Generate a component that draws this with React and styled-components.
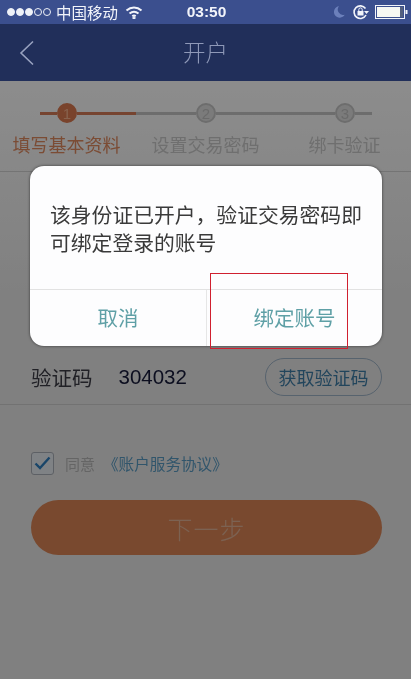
import React from "react";
import styled, { createGlobalStyle } from "styled-components";

const Global = createGlobalStyle`
  html, body { margin: 0; padding: 0; background: #7f7f7f; }
  * { box-sizing: border-box; }
`;

const Screen = styled.div`
  position: relative;
  width: 411px;
  height: 679px;
  overflow: hidden;
  background: linear-gradient(#fff 0, #fff 90px, #e9e9e9 300px);
  font-family: "Noto Sans CJK SC", "Noto Sans", sans-serif;
  filter: blur(0.35px);
`;

const StatusBar = styled.div`
  height: 24px;
  background: #3b4f8e;
  color: #f2f4fa;
  display: grid;
  grid-template-columns: 1fr auto 1fr;
  align-items: center;
  padding: 0 3px 0 7px;
`;

const StatusLeft = styled.div`
  display: flex;
  align-items: center;
`;

const StatusRight = styled.div`
  display: flex;
  align-items: center;
  justify-content: flex-end;
`;

const Dot = styled.span`
  width: 8px;
  height: 8px;
  margin-right: 1px;
  border-radius: 50%;
  border: 1px solid #eef1f8;
  background: ${(p) => (p.$on ? "#eef1f8" : "transparent")};
`;

const Carrier = styled.span`
  font-size: 15.5px;
  line-height: 20px;
  margin-left: 4px;
  margin-right: 7px;
`;

const Clock = styled.span`
  font-family: "Liberation Sans", sans-serif;
  font-weight: 700;
  font-size: 15.5px;
  margin-right: 2px;
`;

const NavBar = styled.div`
  height: 57px;
  padding-bottom: 3px;
  background: #212f5a;
  display: flex;
  align-items: center;
  justify-content: center;
  position: relative;
`;

const BackButton = styled.div`
  position: absolute;
  left: 19px;
  top: 16px;
  width: 16px;
  height: 26px;
  display: flex;
`;

const NavTitle = styled.h1`
  margin: 0;
  font-size: 22.5px;
  font-weight: 300;
  color: #8f99b8;
`;

const StepSection = styled.section`
  height: 91px;
  border-bottom: 1px solid #d4d4d4;
  padding-top: 22px;
`;

const Track = styled.div`
  display: flex;
  align-items: center;
  height: 20px;
  padding-left: 40px;
`;

const Segment = styled.div`
  width: ${(p) => p.$w}px;
  height: 3px;
  background: ${(p) => (p.$on ? "#d87c58" : "#c6c6c6")};
`;

const StepDot = styled.div`
  width: 20px;
  height: 20px;
  border-radius: 50%;
  display: flex;
  align-items: center;
  justify-content: center;
  font-family: "Liberation Sans", sans-serif;
  font-size: 15px;
  background: ${(p) => (p.$on ? "#dc7a50" : "#e0e0e0")};
  border: 2px solid ${(p) => (p.$on ? "#dc7a50" : "#c6c6c6")};
  color: ${(p) => (p.$on ? "#f7b18c" : "#c2c2c2")};
`;

const StepLabels = styled.div`
  display: grid;
  grid-template-columns: repeat(3, 139px);
  justify-content: center;
  margin-top: 9px;
`;

const StepLabel = styled.span`
  text-align: center;
  font-size: 18px;
  line-height: 24px;
  white-space: nowrap;
  color: ${(p) => (p.$on ? "#e08a60" : "#cacaca")};
`;

const Form = styled.div`
  padding-top: 177px;
`;

const CodeRow = styled.div`
  height: 56px;
  display: flex;
  align-items: center;
  padding: 0 29px 0 31px;
  border-bottom: 1px solid #cfcfcf;
`;

const RowLabel = styled.span`
  font-size: 20.5px;
  color: #3c3c46;
`;

const RowValue = styled.span`
  font-family: "Liberation Sans", sans-serif;
  font-size: 20.5px;
  color: #161a3a;
  margin-left: 26px;
  flex: 1;
`;

const CodeButton = styled.div`
  width: 117px;
  height: 38px;
  border-radius: 19px;
  border: 1px solid #9fb4c8;
  color: #3f7ea8;
  font-size: 18px;
  display: flex;
  align-items: center;
  justify-content: center;
`;

const AgreeRow = styled.div`
  display: flex;
  align-items: center;
  margin: 46px 0 0 31px;
  height: 24px;
`;

const CheckBox = styled.div`
  width: 23px;
  height: 23px;
  border: 1px solid #aab0b8;
  border-radius: 3px;
  background: #e8edf2;
  display: flex;
  align-items: center;
  justify-content: center;
`;

const AgreeText = styled.span`
  font-size: 15px;
  color: #b8b8b8;
  margin-left: 11px;
`;

const AgreeLink = styled.span`
  font-size: 15.6px;
  color: #5a9cc4;
  margin-left: 8px;
`;

const NextButton = styled.div`
  margin: 25px 29px 0 31px;
  height: 55px;
  border-radius: 28px;
  background: #dc8556;
  color: #e2b295;
  font-size: 25px;
  font-weight: 300;
  letter-spacing: 1px;
  display: flex;
  align-items: center;
  justify-content: center;
`;

const Overlay = styled.div`
  position: absolute;
  left: 0;
  right: 0;
  top: 81px;
  bottom: 0;
  background: rgba(0, 0, 0, 0.45);
`;

const Dialog = styled.div`
  position: absolute;
  left: 30px;
  top: 85px;
  width: 352px;
  height: 180px;
  background: #fdfdfe;
  border-radius: 14px;
  box-shadow: 0 0 3px rgba(0, 0, 0, 0.6);
  display: flex;
  flex-direction: column;
`;

const DialogText = styled.p`
  margin: 0;
  height: 124px;
  padding: 34px 16px 0 20px;
  font-size: 20.8px;
  line-height: 28px;
  color: #3a3a3a;
  border-bottom: 1px solid #e2e2e2;
`;

const DialogActions = styled.div`
  flex: 1;
  display: grid;
  grid-template-columns: 176px 1fr;
`;

const DialogAction = styled.div`
  display: flex;
  align-items: center;
  justify-content: center;
  padding-bottom: 2px;
  font-size: 20.5px;
  color: #5fa0a6;
  & + & {
    border-left: 1px solid #e6e6e6;
  }
`;

const Annotation = styled.div`
  position: absolute;
  left: 210px;
  top: 273px;
  width: 138px;
  height: 76px;
  border: 1px solid #d0202f;
`;

const Moon = styled.svg`
  margin-right: 6px;
`;

const RotationLock = styled.svg`
  margin-right: 5px;
`;

export default function App() {
  return (
    <Screen>
      <Global />
      <StatusBar>
        <StatusLeft>
          <Dot $on /><Dot $on /><Dot $on /><Dot /><Dot />
          <Carrier>中国移动</Carrier>
          <svg width="18" height="13" viewBox="0 0 18 13" fill="none" stroke="#f2f4fa" strokeWidth="2" aria-label="wifi">
            <path d="M1.5 4.5C6 .5 12 .5 16.5 4.5" />
            <path d="M4.5 7.5c2.7-2.2 6.3-2.2 9 0" />
            <path d="M7.3 10.2c1-.8 2.4-.8 3.4 0" />
            <circle cx="9" cy="11.8" r=".6" fill="#f2f4fa" />
          </svg>
        </StatusLeft>
        <Clock>03:50</Clock>
        <StatusRight>
          <Moon width="14" height="14" viewBox="0 0 16 16" aria-label="moon">
            <path d="M8 1.5a6.5 6.5 0 1 0 6.5 9.5A6 6 0 0 1 8 1.5z" fill="#6c80bb" />
          </Moon>
          <RotationLock width="18" height="16" viewBox="0 0 18 16" fill="none" aria-label="rotation lock">
            <path d="M13.5 4.5A6.3 6.3 0 1 0 14 11" stroke="#f2f4fa" strokeWidth="1.6" />
            <path d="M17 7h-5l2.5 3z" fill="#f2f4fa" />
            <rect x="5.5" y="7" width="6" height="4.5" fill="#f2f4fa" />
            <path d="M6.8 7V5.6a1.7 1.7 0 0 1 3.4 0V7" stroke="#f2f4fa" />
          </RotationLock>
          <svg width="33" height="14" viewBox="0 0 33 14" aria-label="battery">
            <rect x=".5" y=".5" width="29" height="13" fill="#3b4f8e" stroke="#f2f4fa" />
            <rect x="2" y="2" width="23" height="10" fill="#f6f7f2" />
            <rect x="25" y="2" width="3" height="10" fill="#54607e" />
            <rect x="30.5" y="5" width="2" height="4" fill="#f2f4fa" />
          </svg>
        </StatusRight>
      </StatusBar>
      <NavBar>
        <BackButton>
          <svg width="16" height="26" viewBox="0 0 16 26" fill="none" stroke="#98a2bf" strokeWidth="1.6">
            <path d="M14 1.5 2 13l12 11.5" />
          </svg>
        </BackButton>
        <NavTitle>开户</NavTitle>
      </NavBar>
      <StepSection>
        <Track>
          <Segment $on $w={17} />
          <StepDot $on>1</StepDot>
          <Segment $on $w={59} />
          <Segment $w={60} />
          <StepDot>2</StepDot>
          <Segment $w={119} />
          <StepDot>3</StepDot>
          <Segment $w={17} />
        </Track>
        <StepLabels>
          <StepLabel $on>填写基本资料</StepLabel>
          <StepLabel>设置交易密码</StepLabel>
          <StepLabel>绑卡验证</StepLabel>
        </StepLabels>
      </StepSection>
      <Form>
        <CodeRow>
          <RowLabel>验证码</RowLabel>
          <RowValue>304032</RowValue>
          <CodeButton>获取验证码</CodeButton>
        </CodeRow>
        <AgreeRow>
          <CheckBox>
            <svg width="17" height="14" viewBox="0 0 17 14" fill="none" stroke="#2f7fc0" strokeWidth="2.4">
              <path d="M1.5 7.5 6 12 15.5 1.5" />
            </svg>
          </CheckBox>
          <AgreeText>同意</AgreeText>
          <AgreeLink>《账户服务协议》</AgreeLink>
        </AgreeRow>
        <NextButton>下一步</NextButton>
      </Form>
      <Overlay>
        <Dialog>
          <DialogText>该身份证已开户，验证交易密码即可绑定登录的账号</DialogText>
          <DialogActions>
            <DialogAction>取消</DialogAction>
            <DialogAction>绑定账号</DialogAction>
          </DialogActions>
        </Dialog>
      </Overlay>
      <Annotation />
    </Screen>
  );
}
